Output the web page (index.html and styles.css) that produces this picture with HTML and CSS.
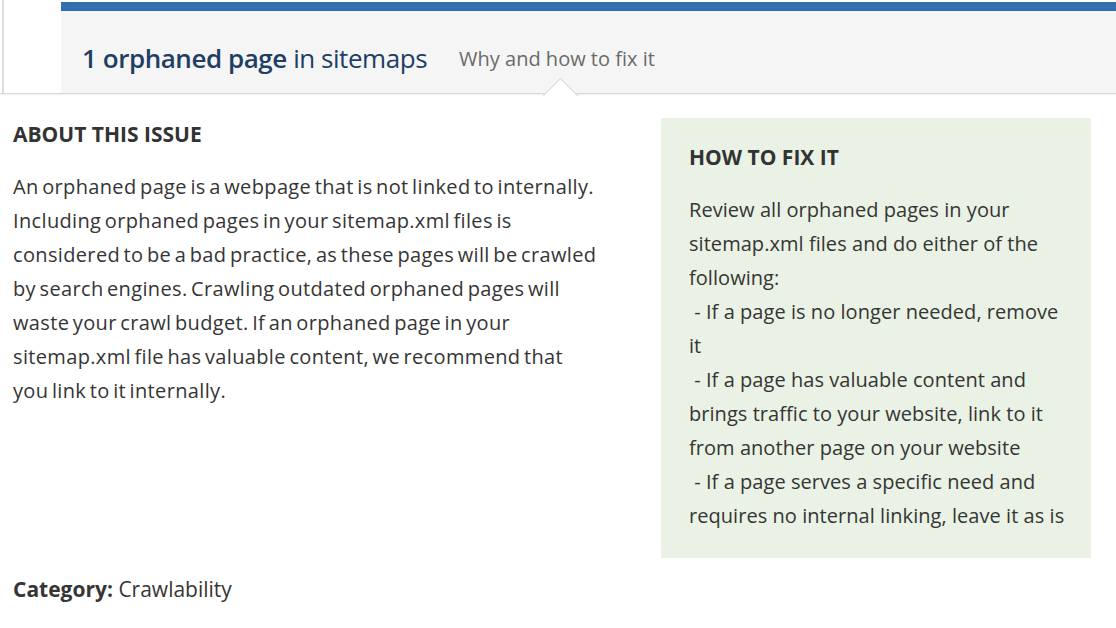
FILE: index.html
```html
<!DOCTYPE html>
<html lang="en">
  <head>
    <meta charset="UTF-8" />
    <title>Orphaned page in sitemaps</title>
    <link rel="stylesheet" href="styles.css">
  </head>
  <body>
    <div class="header">
      <div class="gutter"></div>
      <div class="panel">
        <h1 class="title"><strong>1 orphaned page</strong> in sitemaps</h1>
        <span class="tab">Why and how to fix it</span>
      </div>
    </div>

    <div class="content">
      <div class="about">
        <h2>ABOUT THIS ISSUE</h2>
        <p>An orphaned page is a webpage that is not linked to internally. Including orphaned pages in your sitemap.xml files is considered to be a bad practice, as these pages will be crawled by search engines. Crawling outdated orphaned pages will waste your crawl budget. If an orphaned page in your sitemap.xml file has valuable content, we recommend that you link to it internally.</p>
      </div>
      <div class="fix">
        <h2>HOW TO FIX IT</h2>
        <p class="steps">Review all orphaned pages in your sitemap.xml files and do either of the following:
 - If a page is no longer needed, remove it
 - If a page has valuable content and brings traffic to your website, link to it from another page on your website
 - If a page serves a specific need and requires no internal linking, leave it as is</p>
      </div>
    </div>

    <p class="category"><strong>Category:</strong> Crawlability</p>
  </body>
</html>
```

FILE: styles.css
```css
body {
  margin: 0;
  font-family: "Open Sans", "Noto Sans", sans-serif;
  color: #353535;
  background: #fff;
}

.header {
  display: flex;
  height: 93px;
  border-bottom: 1px solid #d6d6d6;
  box-shadow: 0 1px 2px rgba(0, 0, 0, 0.06);
}
.gutter {
  width: 57px;
  margin-left: 2px;
  border-left: 2px solid #dcdce4;
}
.panel {
  flex: 1;
  position: relative;
  margin-top: 2px;
  background: #f5f5f5;
  border-top: 9px solid #3470b1;
  display: flex;
  align-items: center;
  padding: 12px 0 0 21px;
  gap: 32px;
}
.title {
  margin: 0;
  font-size: 26px;
  font-weight: normal;
  color: #1e3e64;
  letter-spacing: -0.45px;
}
.title strong {
  font-weight: 600;
}
.tab {
  position: relative;
  font-size: 20px;
  color: #6a6a6a;
}
.tab::after {
  content: "";
  position: absolute;
  left: 89px;
  top: 38px;
  width: 24px;
  height: 24px;
  background: #fff;
  border-left: 1px solid #d6d6d6;
  border-top: 1px solid #d6d6d6;
  transform: rotate(45deg);
}

.content {
  display: flex;
  justify-content: space-between;
  padding: 0 25px 0 13px;
}
.about {
  width: 585px;
  padding-top: 28px;
}
h2 {
  margin: 0;
  font-size: 21px;
  line-height: 24px;
  font-weight: 700;
  color: #333;
}
.about p,
.fix p {
  margin: 24px 0 0;
  font-size: 20px;
  line-height: 34px;
  letter-spacing: 0.05px;
}
.about p {
  letter-spacing: 0.35px;
  word-spacing: -2px;
}
.fix {
  width: 378px;
  margin-top: 24px;
  padding: 27px 24px 25px 28px;
  background: #e9f2e4;
}
.steps {
  white-space: pre-wrap;
}

.category {
  margin: 14px 0 0 13px;
  font-size: 21px;
  line-height: 34px;
}
```
